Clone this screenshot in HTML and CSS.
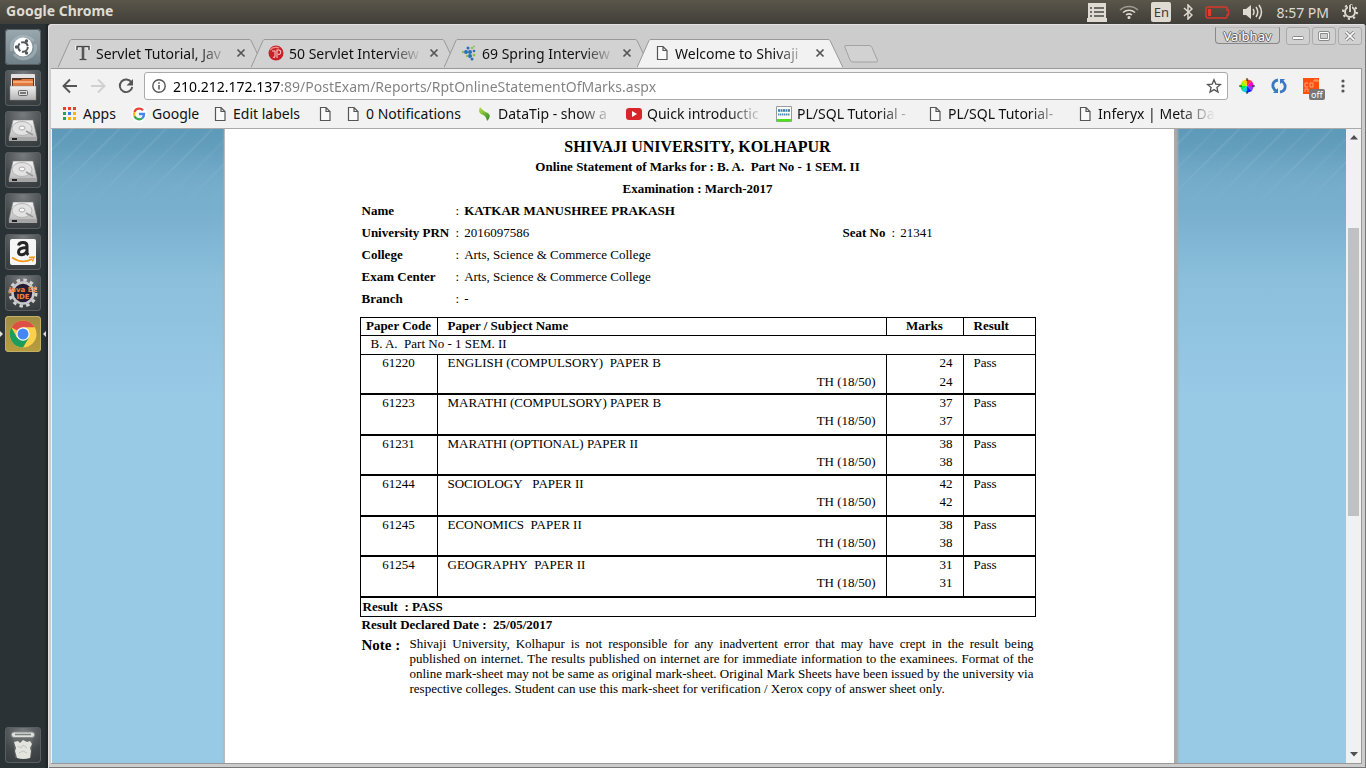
FILE: index.html
```
<!DOCTYPE html>
<html lang="en">
<head>
<meta charset="utf-8">
<title>Statement of Marks</title>
<link rel="stylesheet" href="styles.css">
</head>
<body>
<svg class="defs" aria-hidden="true">
  <defs>
    <linearGradient id="metal" x1="0" y1="0" x2="0" y2="1"><stop offset="0" stop-color="#f2f2f2"/><stop offset="1" stop-color="#b4b4b4"/></linearGradient>
    <linearGradient id="blade" x1="0" y1="0" x2="1" y2="1"><stop offset="0" stop-color="#b9e04a"/><stop offset="1" stop-color="#2a8a1c"/></linearGradient>
    <symbol id="page" viewBox="0 0 12 16"><path d="M1.500 1.500h5.500l4 4v9h-9.500zM7 1.500v4h4" fill="#fafafa" stroke="#555" stroke-width="1.200"/></symbol>
    <symbol id="close" viewBox="0 0 10 10"><path d="M1.500 1.500l7 7M8.500 1.500l-7 7" stroke="#555" stroke-width="1.700"/></symbol>
    <symbol id="drive" viewBox="0 0 36 36">
      <path d="M8 9h20l4 17v3.500H4V26z" fill="url(#metal)" stroke="#777" stroke-width=".6"/>
      <path d="M4 26h28v4H4z" fill="#a5a5a5"/><path d="M7 28h5" stroke="#222" stroke-width="2"/>
      <ellipse cx="17" cy="17.500" rx="10" ry="7" fill="#e2e2e2" stroke="#b4b4b4"/><ellipse cx="17" cy="17" rx="3" ry="2" fill="#f8f8f8" stroke="#aaa"/>
      <path d="M28 24l-7-4" stroke="#999" stroke-width="1.500"/>
    </symbol>
    <symbol id="sqltut" viewBox="0 0 16 16"><path d="M.5.5h15v15H.5z" fill="#fff" stroke="#999"/><path d="M1 13h14v2.500H1z" fill="#4be31b"/><path d="M2 4.500h12" stroke="#3d7fa8" stroke-width="2.500" stroke-dasharray="2 .5"/><path d="M2 8.500h12" stroke="#4a8fb0" stroke-width="2" stroke-dasharray="1.500 .5"/></symbol>
  </defs>
</svg>

<header class="panel">
  <span class="panel-title">Google Chrome</span>
  <div class="indicators">
    <svg width="20" height="19" viewBox="0 0 20 19"><path d="M1 0h18v15h1v4H0v-4h1z" fill="#dfdbd2"/><path d="M3 5h2M7 5h10M3 9h2M7 9h10M3 13h2M7 13h10" stroke="#4a4843" stroke-width="1.500"/></svg>
    <svg width="20" height="14" viewBox="0 0 20 14" fill="none" stroke="#dfdbd2" stroke-width="1.500"><path d="M1 5a13 13 0 0 1 18 0" opacity=".55"/><path d="M4 7.500a9 9 0 0 1 12 0M7 10a5 5 0 0 1 6 0"/><circle cx="10" cy="12.500" r=".8" fill="#dfdbd2"/></svg>
    <span class="lang">En</span>
    <svg width="10" height="16" viewBox="0 0 10 16"><path d="M1 4l8 7-4 4V1l4 4-8 7" fill="none" stroke="#dfdbd2" stroke-width="1.500"/></svg>
    <svg width="25" height="13" viewBox="0 0 25 13"><path d="M3 1h18q1 0 1 1v2h1.500v5H22v2q0 1-1 1H3q-2 0-2-2V3q0-2 2-2z" fill="none" stroke="#d9362b" stroke-width="1.500"/><path d="M3 3h3v7H3z" fill="#e8392d"/></svg>
    <svg width="21" height="16" viewBox="0 0 21 16"><path d="M1 5h3l5-4v14l-5-4H1z" fill="#dfdbd2"/><path d="M11 5q2 3 0 6M14 3q3.500 5 0 10M17 1q5 7 0 14" fill="none" stroke="#dfdbd2" stroke-width="1.500"/></svg>
    <time class="clock">8:57 PM</time>
    <svg width="16" height="16" viewBox="0 0 16 16"><circle cx="8" cy="8" r="5" fill="none" stroke="#dfdbd2" stroke-width="2"/><circle cx="8" cy="8" r="7" fill="none" stroke="#dfdbd2" stroke-width="2" stroke-dasharray="2.200 3.298"/><path d="M8 1v7" stroke="#45433e" stroke-width="4"/><path d="M8 1v7" stroke="#dfdbd2" stroke-width="1.800"/></svg>
  </div>
</header>

<div class="desktop">
  <nav class="launcher" aria-label="Launcher">
    <button class="app dash" aria-label="Dash"><svg width="36" height="36" viewBox="0 0 36 36"><path d="M7 22C3 8 20 3 29 12M30 15c4 13-14 20-21 10" fill="none" stroke="#b8c4ca" stroke-width="3" opacity=".5"/><circle cx="18" cy="18" r="9.500" fill="#fff"/><circle cx="18" cy="18" r="4.800" fill="none" stroke="#50585c" stroke-width="2" stroke-dasharray="8.500 1.550"/><circle cx="11.500" cy="18" r="1.700" fill="#50585c"/><circle cx="21.500" cy="12" r="1.700" fill="#50585c"/><circle cx="21.500" cy="24" r="1.700" fill="#50585c"/></svg></button>
    <button class="app" aria-label="Files"><svg width="36" height="36" viewBox="0 0 36 36"><path d="M6 5q0-1 1-1h22q1 0 1 1v15H6z" fill="#e2e2e2"/><path d="M7 8h22v8H7z" fill="#5a3423"/><path d="M8 10h8l1-1h11v8H8z" fill="#e2783c"/><path d="M8 12h20" stroke="#f8bd8f" stroke-width="1.500"/><path d="M5 16h26v14H5z" fill="url(#metal)" stroke="#888" stroke-width=".5"/><rect x="13.500" y="20.500" width="9" height="5" rx="1" fill="#ddd" stroke="#666"/><path d="M15 23h6" stroke="#555" stroke-width="1.500"/></svg></button>
    <button class="app" aria-label="Drive 1"><svg width="36" height="36"><use href="#drive"/></svg></button>
    <button class="app" aria-label="Drive 2"><svg width="36" height="36"><use href="#drive"/></svg></button>
    <button class="app" aria-label="Drive 3"><svg width="36" height="36"><use href="#drive"/></svg></button>
    <button class="app" aria-label="Amazon"><svg width="36" height="36" viewBox="0 0 36 36"><rect x="5" y="5" width="26" height="26" rx="2" fill="#f6f6f6"/><path d="M13.500 11.500c1-4 8.500-4 8.500.5v6.500q0 1.200 1.300 2.500M22 13.500c-6 0-8.500 1.300-8.500 4.500 0 4 6.500 3.500 8.500-1" fill="none" stroke="#252525" stroke-width="3"/><path d="M7 23.500q10 7 20 1.500" fill="none" stroke="#f39a1d" stroke-width="1.800"/><path d="M24 23.500l5-.5-1.500 4.500" fill="none" stroke="#f39a1d" stroke-width="1.500"/></svg></button>
    <button class="app" aria-label="Java EE IDE"><svg width="36" height="36" viewBox="0 0 36 36"><circle cx="18" cy="18" r="13" fill="none" stroke="#d2d2d2" stroke-width="3" stroke-dasharray="3.400 3.407"/><circle cx="18" cy="18" r="10.500" fill="#241d35" stroke="#c8c8c8" stroke-width="2.500"/><text x="18" y="17" class="eclipse" text-anchor="middle">Java EE</text><text x="18" y="24" class="eclipse" text-anchor="middle">IDE</text></svg></button>
    <button class="app chrome" aria-label="Google Chrome"><svg width="36" height="36" viewBox="0 0 36 36"><circle cx="18" cy="18" r="13.500" fill="#fbd04b"/><path d="M18 18L6.300 11.300A13.500 13.500 0 0 1 29.700 11.300H18z" fill="#dd5144"/><path d="M18 18l6 3.500-6 10A13.500 13.500 0 0 1 6.300 11.300L12 21.500z" fill="#1d9d5b"/><circle cx="18" cy="18" r="6.700" fill="#fff"/><circle cx="18" cy="18" r="5.500" fill="#4487f4"/></svg></button>
    <button class="app trash" aria-label="Trash"><svg width="36" height="36" viewBox="0 0 36 36"><path d="M8 9l2 22h16l2-22z" fill="#6d7370" opacity=".6"/><path d="M9 15l4-1 2 2 3-3 4 2 3-1 2 3-2 4 1 3-1 7q-7 2-13 0l-2-7 1-3z" fill="#e4e4df"/><path d="M13 19l3 2 2-3 4 3M14 26l4-2 4 2" fill="none" stroke="#bfc2bd"/><rect x="6.500" y="5" width="23" height="5.500" rx="2.500" fill="#dbe0dc" stroke="#888"/><path d="M10 7.500h16" stroke="#7c827e" stroke-width="1.500"/></svg></button>
  </nav>

  <main class="window">
    <div class="tabstrip">
      <div class="tabs" role="tablist">
        <div class="tab" role="tab">
          <svg class="tab-shape" viewBox="0 0 206 29" preserveAspectRatio="none"><path d="M0 28.500L12 1.500q.5-1 2-1H191q1.500 0 2 1L206 28.500"/></svg>
          <svg class="favicon" viewBox="0 0 16 16"><path d="M2 5V1.500h12V5M8 1.500V15M4.500 14.500h7" fill="none" stroke="#eee" stroke-width="4"/><path d="M2 5V1.500h12V5M4.500 14.500h7" fill="none" stroke="#444" stroke-width="1.400"/><path d="M8 1.500V15" stroke="#555" stroke-width="2.800"/></svg>
          <span class="tab-label">Servlet Tutorial, Jav</span>
          <button class="tab-close" aria-label="Close tab"><svg width="10" height="10"><use href="#close"/></svg></button>
        </div>
        <div class="tab" role="tab">
          <svg class="tab-shape" viewBox="0 0 206 29" preserveAspectRatio="none"><path d="M0 28.500L12 1.500q.5-1 2-1H191q1.500 0 2 1L206 28.500"/></svg>
          <svg class="favicon" viewBox="0 0 16 16"><circle cx="8" cy="8" r="7.500" fill="#c91f27"/><path d="M2 5q4-4 9-2" fill="none" stroke="#ef8a85" stroke-width="1.500"/><path d="M4 6h3v5q0 2-2 1M9 13V5h2q3 1 1 4l-2 .5" fill="none" stroke="#f7c9c7" stroke-width="1.100"/></svg>
          <span class="tab-label">50 Servlet Interview</span>
          <button class="tab-close" aria-label="Close tab"><svg width="10" height="10"><use href="#close"/></svg></button>
        </div>
        <div class="tab" role="tab">
          <svg class="tab-shape" viewBox="0 0 206 29" preserveAspectRatio="none"><path d="M0 28.500L12 1.500q.5-1 2-1H191q1.500 0 2 1L206 28.500"/></svg>
          <svg class="favicon" viewBox="0 0 16 16"><g fill="#2a6db8"><circle cx="7" cy="3" r="1.500"/><circle cx="5" cy="7" r="2"/><circle cx="9" cy="7" r="2"/><circle cx="9" cy="11" r="2"/><circle cx="11" cy="14" r="1.500"/><circle cx="13" cy="6" r="1.300"/></g><g fill="#8cc152"><circle cx="11" cy="3" r="1.300"/><circle cx="13" cy="10" r="1.500"/><circle cx="2" cy="7" r="1.300"/><circle cx="6" cy="11" r="1.200"/><circle cx="13" cy="1.500" r="1"/></g></svg>
          <span class="tab-label">69 Spring Interview</span>
          <button class="tab-close" aria-label="Close tab"><svg width="10" height="10"><use href="#close"/></svg></button>
        </div>
        <div class="tab active" role="tab" aria-selected="true">
          <svg class="tab-shape" viewBox="0 0 206 29" preserveAspectRatio="none"><path d="M0 28.500L12 1.500q.5-1 2-1H191q1.500 0 2 1L206 28.500"/></svg>
          <svg class="favicon" viewBox="0 0 16 16"><use href="#page"/></svg>
          <span class="tab-label">Welcome to Shivaji</span>
          <button class="tab-close" aria-label="Close tab"><svg width="10" height="10"><use href="#close"/></svg></button>
        </div>
        <button class="new-tab" aria-label="New tab"><svg width="34" height="18" viewBox="0 0 34 18"><path d="M2 .5h23q2 0 3 2l5.500 13q.5 1.500-1 1.500H9q-2 0-3-2L.8 2Q.500.500 2 .5z" fill="#d2d2d2" stroke="#a2a2a2"/></svg></button>
      </div>
      <div class="window-controls">
        <button class="profile">Vaibhav</button>
        <button class="control" aria-label="Minimize"><svg width="12" height="10"><rect x=".5" y="5.500" width="11" height="3" rx="1" fill="#fff" stroke="#888"/></svg></button>
        <button class="control" aria-label="Maximize"><svg width="12" height="10"><rect x="1.500" y="1.500" width="9" height="7" rx="1" fill="none" stroke="#888" stroke-width="3"/><rect x="1.500" y="1.500" width="9" height="7" rx="1" fill="none" stroke="#fff" stroke-width="1.200"/></svg></button>
        <button class="control" aria-label="Close"><svg width="12" height="10"><path d="M2 1l8 8M10 1L2 9" stroke="#888" stroke-width="3.500"/><path d="M2 1l8 8M10 1L2 9" stroke="#fff" stroke-width="1.700"/></svg></button>
      </div>
    </div>

    <div class="frame">
      <form class="toolbar">
        <button type="button" class="tool" aria-label="Back"><svg width="16" height="16" viewBox="0 0 16 16"><path d="M15 8H2M8 1.500L1.500 8 8 14.500" fill="none" stroke="#555" stroke-width="1.900"/></svg></button>
        <button type="button" class="tool" aria-label="Forward"><svg width="16" height="16" viewBox="0 0 16 16"><path d="M1 8h13M8 1.500L14.500 8 8 14.500" fill="none" stroke="#d0d0d0" stroke-width="1.900"/></svg></button>
        <button type="button" class="tool" aria-label="Reload"><svg width="16" height="16" viewBox="0 0 16 16"><path d="M13.500 4.500A6.300 6.300 0 1 0 14.300 9" fill="none" stroke="#555" stroke-width="1.900"/><path d="M15 1v6.500H8.500z" fill="#555"/></svg></button>
        <div class="omnibox">
          <svg width="14" height="14" viewBox="0 0 14 14"><circle cx="7" cy="7" r="6.200" fill="none" stroke="#555" stroke-width="1.400"/><path d="M7 6v4.500M7 3.300v1.500" stroke="#555" stroke-width="1.500"/></svg>
          <input class="url" type="text" aria-label="Address" value="210.212.172.137:89/PostExam/Reports/RptOnlineStatementOfMarks.aspx">
          <button type="button" class="star" aria-label="Bookmark"><svg width="16" height="16" viewBox="0 0 16 16"><path d="M8 1.800l1.800 4.300 4.700.4-3.600 3 1.100 4.600L8 11.600l-4 2.500 1.100-4.600-3.600-3 4.700-.4z" fill="none" stroke="#555" stroke-width="1.300"/></svg></button>
        </div>
        <div class="extensions">
          <button type="button" class="tool" aria-label="Colour picker"><svg width="16" height="16" viewBox="0 0 16 16"><path d="M8 8V1l5 2z" fill="#f33"/><path d="M8 8l5-5 2 5z" fill="#f0c"/><path d="M8 8h7l-2 5z" fill="#93f"/><path d="M8 8l5 5-5 2z" fill="#12f"/><path d="M8 8v7l-5-2z" fill="#0cf"/><path d="M8 8l-5 5-2-5z" fill="#0e5"/><path d="M8 8H1l2-5z" fill="#9f0"/><path d="M8 8L3 3l5-2z" fill="#fc0"/><path d="M8 0v3M8 13v3M0 8h3M13 8h3" stroke="#222"/></svg></button>
          <button type="button" class="tool" aria-label="Sync"><svg width="16" height="16" viewBox="0 0 16 16" fill="none" stroke="#3d78c4" stroke-width="2.800"><path d="M7 2Q1 3 2 9q1 3 4 4.500M9 14q6-1 5-7-1-3-4-4.500"/><path d="M7 10v5H2zM9 6V1h5z" fill="#3d78c4" stroke="none"/></svg></button>
          <button type="button" class="tool" aria-label="Extension, off"><svg width="16" height="16" viewBox="0 0 16 16"><path d="M0 0h16v16H0z" fill="#ff4f0a"/><path d="M5 5H2v4h3M7 5h3v4H7zM11 4V2h4v2M2 14v-3h3v3M13 2v2" fill="none" stroke="#ffa57e"/></svg><span class="badge">off</span></button>
          <button type="button" class="tool" aria-label="Menu"><svg width="16" height="16" viewBox="0 0 16 16" fill="#555"><circle cx="8" cy="3" r="1.600"/><circle cx="8" cy="8" r="1.600"/><circle cx="8" cy="13" r="1.600"/></svg></button>
        </div>
      </form>

      <nav class="bookmarks" aria-label="Bookmarks">
        <a href="#"><svg viewBox="0 0 16 16"><path d="M1 1h3v3H1zM6 1h3v3H6zM11 1h3v3h-3z" fill="#e8402f"/><path d="M1 6h3v3H1z" fill="#1ca35c"/><path d="M6 6h3v3H6z" fill="#3b7de8"/><path d="M11 6h3v3h-3zM6 11h3v3H6zM11 11h3v3h-3z" fill="#f9b40b"/><path d="M1 11h3v3H1z" fill="#1ca35c"/></svg><span>Apps</span></a>
        <a href="#"><svg viewBox="0 0 16 16"><circle cx="8" cy="8" r="8" fill="#fff"/><g fill="none" stroke-width="2.300"><path d="M12 4.300A5 5 0 0 0 3.500 6" stroke="#ea4335"/><path d="M3.500 6a5 5 0 0 0 0 4.300" stroke="#fbbc05"/><path d="M3.500 10.300a5 5 0 0 0 8 1.700" stroke="#34a853"/><path d="M8 8h5q0 2.700-1.500 4" stroke="#4285f4"/></g></svg><span>Google</span></a>
        <a href="#"><svg viewBox="0 0 16 16"><use href="#page"/></svg><span>Edit labels</span></a>
        <a href="#" aria-label="Untitled bookmark"><svg viewBox="0 0 16 16"><use href="#page"/></svg></a>
        <a href="#"><svg viewBox="0 0 16 16"><use href="#page"/></svg><span>0 Notifications</span></a>
        <a href="#"><svg viewBox="0 0 16 16"><path d="M3 1Q0 7 6 9q3 1 4 6 5-5 1-8-4-1-8-6z" fill="url(#blade)"/></svg><span>DataTip - show a</span></a>
        <a href="#"><svg viewBox="0 0 16 16"><rect y="2" width="16" height="12" rx="3" fill="#d9252a"/><path d="M6 5l5 3-5 3z" fill="#fff"/></svg><span>Quick introductic</span></a>
        <a href="#"><svg viewBox="0 0 16 16"><use href="#sqltut"/></svg><span>PL/SQL Tutorial -</span></a>
        <a href="#"><svg viewBox="0 0 16 16"><use href="#page"/></svg><span>PL/SQL Tutorial-</span></a>
        <a href="#"><svg viewBox="0 0 16 16"><use href="#page"/></svg><span>Inferyx | Meta Da</span></a>
      </nav>

      <div class="viewport">
        <div class="backdrop">
          <article class="sheet">
            <div class="report">
              <h1>SHIVAJI UNIVERSITY, KOLHAPUR</h1>
              <h2>Online Statement of Marks for : B. A.&nbsp; Part No - 1 SEM. II</h2>
              <h2>Examination : March-2017</h2>
              <dl class="details">
                <div><dt>Name</dt><dd><b>KATKAR MANUSHREE PRAKASH</b></dd></div>
                <div><dt>University PRN</dt><dd>2016097586</dd><dt>Seat No</dt><dd>21341</dd></div>
                <div><dt>College</dt><dd>Arts, Science &amp; Commerce College</dd></div>
                <div><dt>Exam Center</dt><dd>Arts, Science &amp; Commerce College</dd></div>
                <div><dt>Branch</dt><dd>-</dd></div>
              </dl>
              <table class="marks">
                <colgroup><col class="c-code"><col><col class="c-marks"><col class="c-result"></colgroup>
                <thead>
                  <tr><th class="code">Paper Code</th><th>Paper / Subject Name</th><th class="code">Marks</th><th>Result</th></tr>
                  <tr><td colspan="4">B. A.&nbsp; Part No - 1 SEM. II</td></tr>
                </thead>
                <tbody>
                  <tr><td class="code">61220</td><td>ENGLISH (COMPULSORY)&nbsp; PAPER B</td><td class="num">24</td><td>Pass</td></tr>
                  <tr><td></td><td class="num">TH (18/50)</td><td class="num">24</td><td></td></tr>
                </tbody>
                <tbody>
                  <tr><td class="code">61223</td><td>MARATHI (COMPULSORY) PAPER B</td><td class="num">37</td><td>Pass</td></tr>
                  <tr><td></td><td class="num">TH (18/50)</td><td class="num">37</td><td></td></tr>
                </tbody>
                <tbody>
                  <tr><td class="code">61231</td><td>MARATHI (OPTIONAL) PAPER II</td><td class="num">38</td><td>Pass</td></tr>
                  <tr><td></td><td class="num">TH (18/50)</td><td class="num">38</td><td></td></tr>
                </tbody>
                <tbody>
                  <tr><td class="code">61244</td><td>SOCIOLOGY&nbsp;&nbsp; PAPER II</td><td class="num">42</td><td>Pass</td></tr>
                  <tr><td></td><td class="num">TH (18/50)</td><td class="num">42</td><td></td></tr>
                </tbody>
                <tbody>
                  <tr><td class="code">61245</td><td>ECONOMICS&nbsp; PAPER II</td><td class="num">38</td><td>Pass</td></tr>
                  <tr><td></td><td class="num">TH (18/50)</td><td class="num">38</td><td></td></tr>
                </tbody>
                <tbody>
                  <tr><td class="code">61254</td><td>GEOGRAPHY&nbsp; PAPER II</td><td class="num">31</td><td>Pass</td></tr>
                  <tr><td></td><td class="num">TH (18/50)</td><td class="num">31</td><td></td></tr>
                </tbody>
                <tfoot>
                  <tr><th colspan="4">Result&nbsp; : PASS</th></tr>
                </tfoot>
              </table>
              <p class="declared">Result Declared Date :&nbsp; 25/05/2017</p>
              <div class="note">
                <strong>Note :</strong>
                <p>Shivaji University, Kolhapur is not responsible for any inadvertent error that may have crept in the result being published on internet. The results published on internet are for immediate information to the examinees. Format of the online mark-sheet may not be same as original mark-sheet. Original Mark Sheets have been issued by the university via respective colleges. Student can use this mark-sheet for verification / Xerox copy of answer sheet only.</p>
              </div>
            </div>
          </article>
        </div>
        <div class="scrollbar" aria-hidden="true">
          <svg width="8" height="5" viewBox="0 0 8 5"><path d="M4 0l4 4.500H0z" fill="#505050"/></svg>
          <div class="track"><div class="thumb"></div></div>
          <svg width="8" height="5" viewBox="0 0 8 5"><path d="M4 4.500L0 0h8z" fill="#505050"/></svg>
        </div>
      </div>
    </div>
  </main>
</div>
</body>
</html>
```

FILE: styles.css
```
* { box-sizing: border-box; }

body {
  margin: 0;
  height: 100vh;
  display: flex;
  flex-direction: column;
  overflow: hidden;
  background: #2b2d2f;
  font-family: "Noto Sans", "Open Sans", sans-serif;
  font-size: 14px;
  color: #111;
}

button {
  padding: 0;
  border: 0;
  background: none;
  font: inherit;
  color: inherit;
}

svg { display: block; flex: none; }
.defs { position: absolute; width: 0; height: 0; }

/* Top panel */
.panel {
  flex: none;
  height: 24px;
  padding: 0 8px 0 6px;
  display: flex;
  align-items: center;
  justify-content: space-between;
  background: linear-gradient(#5a564a, #403e39);
  color: #dfdbd2;
}
.panel-title { font-weight: 700; line-height: 22px; margin-bottom: 2px; }
.indicators { display: flex; align-items: center; gap: 12px; }
.clock { padding: 0 1px; }
.lang {
  width: 20px;
  height: 20px;
  border-radius: 2px;
  background: #dfdbd2;
  color: #3c3b37;
  font-size: 13px;
  line-height: 20px;
  text-align: center;
}

/* Launcher */
.desktop { flex: 1; min-height: 0; display: flex; }
.launcher {
  flex: none;
  width: 48px;
  padding: 5px;
  display: flex;
  flex-direction: column;
  gap: 5px;
  background: linear-gradient(90deg, #2b3235 44px, #1d2123);
}
.app {
  flex: none;
  width: 36px;
  height: 36px;
  position: relative;
  border-radius: 4px;
  background: radial-gradient(circle at 50% 10%, #777b7d, #43484a 60%, #35393b);
  box-shadow: inset 0 0 0 1px #595e60;
}
.dash { background: linear-gradient(#9aa8af, #6f7f87); }
.chrome { background: linear-gradient(#a08d47, #b79d3e); box-shadow: inset 0 0 0 1px #c4b064; }
.chrome::before, .chrome::after {
  content: "";
  position: absolute;
  top: 15px;
  border: 3px solid transparent;
}
.chrome::before { left: -5px; border-left-color: #ddd; }
.chrome::after { right: -5px; border-right-color: #ddd; }
.trash { margin-top: auto; }
.eclipse { font: 700 7px "DejaVu Sans", sans-serif; fill: #f08432; }

/* Browser window */
.window {
  flex: 1;
  min-width: 0;
  display: flex;
  flex-direction: column;
  padding: 0 4px 4px 3px;
  border-radius: 4px 4px 0 0;
  background: #ccc;
  box-shadow: inset 1px 1px #e4e0e0, inset -1px -1px #777;
}
.tabstrip { flex: none; height: 44px; display: flex; justify-content: space-between; }
.tabs { display: flex; align-items: flex-end; padding: 0 0 1px 7px; }
.tab {
  position: relative;
  width: 206px;
  height: 28px;
  margin-right: -13px;
  padding: 0 18px 0 17px;
  display: flex;
  align-items: center;
}
.tab-shape {
  position: absolute;
  inset: 0;
  width: 100%;
  height: 29px;
  fill: #d2d2d2;
  stroke: #999;
}
.active .tab-shape { fill: #f2f2f2; }
.active { z-index: 1; }
.favicon { width: 16px; height: 16px; position: relative; }
.tab-label {
  position: relative;
  flex: 1;
  min-width: 0;
  margin: 0 7px 0 5px;
  white-space: nowrap;
  mask-image: linear-gradient(90deg, #000 calc(100% - 32px), transparent);
}
.tab-close { position: relative; width: 10px; height: 10px; }
.new-tab { margin: 0 0 4px 14px; }

.window-controls { display: flex; align-items: flex-start; gap: 2px; padding-top: 3px; }
.profile {
  width: 65px;
  height: 17px;
  margin-right: 4px;
  border: 1px solid #888;
  border-top-color: #bbb;
  border-radius: 0 0 4px 4px;
  color: #fff;
  font-size: 13px;
  line-height: 14px;
  text-shadow: 1px 0 #666, -1px 0 #666, 0 1px #666, 0 -1px #666;
}
.control {
  width: 24px;
  height: 18px;
  display: grid;
  place-items: center;
  border: 1px solid #aaa;
  border-radius: 3px;
  background: #d0d0d0;
}

.frame {
  flex: 1;
  min-height: 0;
  display: flex;
  flex-direction: column;
  border: 1px solid #999;
  border-width: 1px 1px 1px 0;
  background: #f2f2f2;
}

/* Toolbar */
.toolbar { flex: none; height: 34px; display: flex; align-items: center; padding: 0 10px 0 11px; }
.toolbar > .tool { margin-right: 12px; }
.tool { width: 16px; height: 16px; position: relative; }
.omnibox {
  flex: 1;
  height: 28px;
  margin-right: 11px;
  margin-left: -2px;
  padding: 0 5px 0 7px;
  display: flex;
  align-items: center;
  gap: 7px;
  border: 1px solid #aaa;
  border-radius: 3px;
  background: #fff;
}
.url {
  flex: 1;
  min-width: 0;
  padding: 0;
  border: 0;
  outline: 0;
  font: inherit;
  color: transparent;
  background: linear-gradient(90deg, #000 107px, #808080 107px);
  -webkit-background-clip: text;
  background-clip: text;
}
.extensions { display: flex; gap: 16px; }
.badge {
  position: absolute;
  top: 4px;
  left: 6px;
  padding: 0 2px;
  border-radius: 2px;
  background: #777;
  color: #fff;
  font-size: 9px;
  line-height: 11px;
}
.tool .badge { top: auto; bottom: -6px; }

/* Bookmarks bar */
.bookmarks {
  flex: none;
  height: 26px;
  padding: 0 8px 4px 11px;
  display: grid;
  grid-template-columns: 69px 81px 105px 28px 132px 149px 150px 151px 150px 145px;
  align-items: center;
  border-bottom: 1px solid #aaa;
}
.bookmarks a { display: flex; align-items: center; gap: 5px; color: inherit; text-decoration: none; }
.bookmarks svg { width: 16px; height: 16px; }
.bookmarks span { flex: 1; white-space: nowrap; }
.bookmarks a:nth-child(n + 6) span {
  margin-right: 12px;
  mask-image: linear-gradient(90deg, #000 calc(100% - 36px), transparent);
}

/* Page */
.viewport { flex: 1; min-height: 0; display: flex; margin-left: 1px; }
.backdrop {
  flex: 1;
  display: flex;
  justify-content: center;
  overflow: hidden;
  background:
    linear-gradient(transparent 20px, #78afcd 80px, transparent 81px) top / 100% 81px no-repeat,
    repeating-linear-gradient(135deg, transparent 0 13px, rgba(255, 255, 255, .08) 14px 15px, transparent 16px 29px, rgba(255, 255, 255, .05) 31px, transparent 33px) top / 100% 80px no-repeat,
    linear-gradient(#5d99b8, #78afcd 80px, #8bbfdc 150px, #98cae6 270px);
}
.sheet {
  width: 950px;
  max-width: 100%;
  padding: 8px 18px 8px 14px;
  background: #fff;
  border-left: 1px solid #bbb;
  box-shadow: 2px 0 2px 2px #aaa;
  font-family: "Liberation Serif", serif;
  font-size: 13px;
  color: #000;
}
.report { max-width: 676px; margin: 0 auto; }
.report h1 { margin: 0; font-size: 16px; line-height: 20px; text-align: center; }
.report h2 { margin: 0; font-size: 13px; line-height: 22px; text-align: center; }
.report h1 + h2 { margin-bottom: 1px; line-height: 20px; }
.details { margin: 0 2px 7px; }
.details div {
  display: grid;
  grid-template-columns: 94px 387px 49px 1fr;
  line-height: 22px;
}
.details dt { font-weight: 700; }
.details dd { margin: 0; }
.details dd::before { content: ":"; margin-right: 5px; }

.marks { width: 100%; table-layout: fixed; border-collapse: collapse; border: 1px solid #000; }
.c-code { width: 77px; }
.c-marks { width: 77px; }
.c-result { width: 72px; }
.marks th, .marks td {
  height: 19px;
  padding: 0 10px;
  line-height: 16px;
  text-align: left;
  vertical-align: top;
}
.marks thead th { height: 18px; border: 1px solid #000; }
.marks thead td { border-bottom: 1px solid #000; }
.marks tbody td { border: solid #000; border-width: 0 1px; }
.marks tbody { border-bottom: 2px solid #000; }
.marks tbody tr + tr td { height: 21px; }
.marks tbody:nth-of-type(1) tr + tr td { height: 20px; }
.marks tbody:nth-of-type(even) tr + tr td { height: 22px; }
.marks .code { padding: 0; text-align: center; }
.marks .num { text-align: right; }
.marks tfoot th { height: 20px; padding: 0 2px; vertical-align: middle; }
.declared { margin: 0 2px 3px; font-weight: 700; line-height: 16px; }
.note { margin: 0 2px; display: grid; grid-template-columns: 48px 1fr; }
.note strong { font-size: 15px; line-height: 18px; }
.note p { margin: 0; line-height: 15px; text-align: justify; }

/* Scrollbar */
.scrollbar {
  flex: none;
  width: 15px;
  padding: 6px 0;
  display: flex;
  flex-direction: column;
  align-items: center;
  background: #f1f1f1;
}
.track { flex: 1; align-self: stretch; padding: 88px 2px 0; }
.thumb { height: 55%; background: #c1c1c1; }
```
